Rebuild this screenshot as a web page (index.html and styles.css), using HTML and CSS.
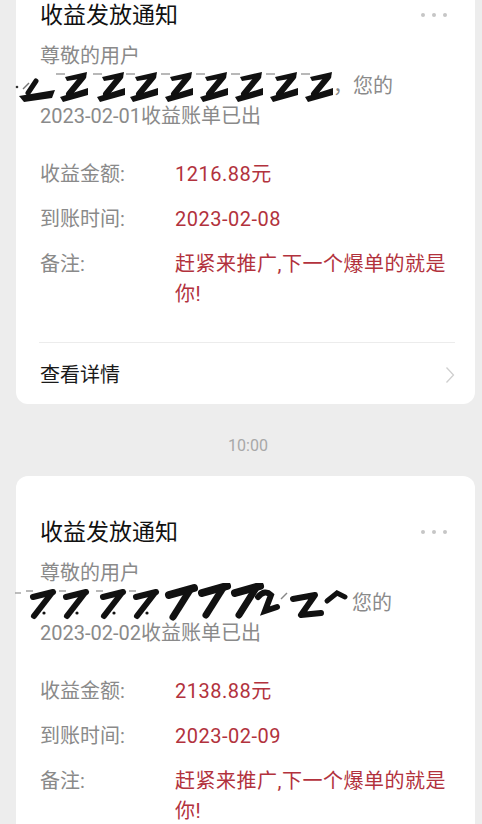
FILE: index.html
```html
<!DOCTYPE html>
<html lang="zh-CN">
<head>
<meta charset="utf-8">
<title>收益发放通知</title>
<link rel="stylesheet" href="styles.css">
</head>
<body>
<main class="feed">
  <article class="card card--first">
    <header class="card-head">
      <h2 class="card-title">收益发放通知</h2>
      <span class="more"><i></i><i></i><i></i></span>
    </header>
    <div class="greeting">
      <p>尊敬的用户</p>
      <p class="masked">
        <svg class="scribble scribble--a" width="318" height="36" viewBox="0 0 318 36">
          <defs>
            <g id="za">
              <path d="M-7 6 L2 6" stroke="#9a9a9a" stroke-width="1.4" fill="none"/>
              <path d="M2 9 L24 4 L23 10 L4 13 Z" fill="#111"/>
              <path d="M20 9 L6 26" stroke="#111" stroke-width="6" stroke-linecap="round" fill="none"/>
              <path d="M-3 29 L25 20 L25 27 L0 34 Z" fill="#111"/>
            </g>
          </defs>
          <circle cx="2" cy="19" r="1.3" fill="#333"/>
          <path d="M8 21 L14 15" stroke="#777" stroke-width="1.5" fill="none"/>
          <path d="M21 13 L13 25" stroke="#111" stroke-width="5" stroke-linecap="round" fill="none"/>
          <path d="M4 28 L40 22 L37 30 L9 34 Z" fill="#111"/>
          <use href="#za" x="48" y="0"/>
          <use href="#za" x="85" y="0"/>
          <use href="#za" x="118" y="0"/>
          <use href="#za" x="153" y="0"/>
          <use href="#za" x="188" y="0"/>
          <use href="#za" x="223" y="0"/>
          <use href="#za" x="258" y="0"/>
          <use href="#za" x="293" y="0"/>
        </svg><span>，您的</span>
      </p>
      <p>2023-02-01收益账单已出</p>
    </div>
    <dl class="fields">
      <div class="field"><dt>收益金额:</dt><dd>1216.88元</dd></div>
      <div class="field"><dt>到账时间:</dt><dd>2023-02-08</dd></div>
      <div class="field"><dt>备注:</dt><dd>赶紧来推广,下一个爆单的就是你!</dd></div>
    </dl>
    <a class="card-foot" href="#">
      <span>查看详情</span>
      <svg class="chevron" width="10" height="18" viewBox="0 0 10 18"><path d="M1.5 1.5 L8.5 9 L1.5 16.5" fill="none" stroke="#cfcfcf" stroke-width="1.3"/></svg>
    </a>
  </article>

  <div class="time">10:00</div>

  <article class="card">
    <header class="card-head">
      <h2 class="card-title">收益发放通知</h2>
      <span class="more"><i></i><i></i><i></i></span>
    </header>
    <div class="greeting">
      <p>尊敬的用户</p>
      <p class="masked">
        <svg class="scribble scribble--b" width="337" height="40" viewBox="0 0 337 40">
          <defs>
            <g id="zb">
              <path d="M-4 8 L3 8" stroke="#9a9a9a" stroke-width="1.4" fill="none"/>
              <path d="M3 14 L23 9" stroke="#111" stroke-width="6" stroke-linecap="round" fill="none"/>
              <path d="M21 11 L4 33" stroke="#111" stroke-width="6" stroke-linecap="round" fill="none"/>
              <circle cx="14" cy="30" r="1.6" fill="#111"/>
            </g>
            <g id="zc">
              <path d="M2 12 L27 5" stroke="#111" stroke-width="8" stroke-linecap="round" fill="none"/>
              <path d="M23 7 L6 34" stroke="#111" stroke-width="7" stroke-linecap="round" fill="none"/>
            </g>
          </defs>
          <path d="M-6 10 L6 10" stroke="#999" stroke-width="1.3" fill="none"/>
          <use href="#zb" x="15" y="0"/>
          <use href="#zb" x="48" y="0"/>
          <use href="#zb" x="85" y="0"/>
          <use href="#zb" x="118" y="0"/>
          <use href="#zc" x="152" y="0"/>
          <use href="#zc" x="185" y="-2"/>
          <use href="#zc" x="218" y="-2"/>
          <path d="M243 14 Q250 6 256 12 L250 28 L262 24" stroke="#111" stroke-width="6" fill="none" stroke-linecap="round"/>
          <path d="M266 16 L272 10" stroke="#888" stroke-width="1.4" fill="none"/>
          <path d="M278 16 L300 12 L286 32 L306 30" stroke="#111" stroke-width="6" fill="none" stroke-linecap="round" stroke-linejoin="round"/>
          <path d="M312 18 L322 10 L330 14" stroke="#111" stroke-width="5" fill="none" stroke-linecap="round"/>
        </svg><span>您的</span>
      </p>
      <p>2023-02-02收益账单已出</p>
    </div>
    <dl class="fields">
      <div class="field"><dt>收益金额:</dt><dd>2138.88元</dd></div>
      <div class="field"><dt>到账时间:</dt><dd>2023-02-09</dd></div>
      <div class="field"><dt>备注:</dt><dd>赶紧来推广,下一个爆单的就是你!</dd></div>
    </dl>
    <a class="card-foot" href="#">
      <span>查看详情</span>
      <svg class="chevron" width="10" height="18" viewBox="0 0 10 18"><path d="M1.5 1.5 L8.5 9 L1.5 16.5" fill="none" stroke="#cfcfcf" stroke-width="1.3"/></svg>
    </a>
  </article>
</main>
</body>
</html>
```

FILE: styles.css
```css
* { box-sizing: border-box; }

html, body {
  margin: 0;
  padding: 0;
  background: #ededed;
}

body {
  font-family: Roboto, "Noto Sans CJK SC", sans-serif;
  overflow: hidden;
}

.feed {
  padding: 0 7px 0 16px;
  margin-top: -41px;
  display: flex;
  flex-direction: column;
}

.card {
  background: #ffffff;
  border-radius: 12px;
  padding: 42px 20px 0 24px;
}

.card-head {
  display: flex;
  align-items: center;
  justify-content: space-between;
}

.card-title {
  margin: 0;
  font-size: 23px;
  font-weight: 400;
  line-height: 30px;
  color: #111111;
}

.more {
  display: flex;
  gap: 7px;
  margin-right: 8px;
  margin-top: -2px;
}

.more i {
  width: 4px;
  height: 4px;
  border-radius: 50%;
  background: #c6c6c6;
}

.greeting {
  margin-top: 10px;
}

.greeting p {
  margin: 0;
  font-size: 20px;
  line-height: 30px;
  color: #8a8a8a;
}

.masked {
  display: flex;
  align-items: center;
  height: 30px;
  white-space: nowrap;
}

.scribble {
  flex: none;
  margin-left: -25px;
}

.fields {
  margin: 28px 0 0;
  display: flex;
  flex-direction: column;
  gap: 15px;
}

.field {
  display: grid;
  grid-template-columns: 135px 1fr;
  font-size: 20px;
  line-height: 30px;
}

.field dt {
  color: #8a8a8a;
}

.field dd {
  margin: 0;
  color: #b2323d;
  letter-spacing: 0.5px;
}

.card-foot {
  margin-top: 33px;
  border-top: 1px solid #ececec;
  margin-left: -1px;
  display: flex;
  align-items: center;
  justify-content: space-between;
  padding: 17px 0 14px 1px;
  font-size: 20px;
  line-height: 30px;
  color: #1a1a1a;
  text-decoration: none;
}

.chevron {
  display: block;
}

.time {
  padding: 32px 0 20px 5px;
  line-height: 20px;
  text-align: center;
  font-size: 16px;
  color: #a8a8a8;
}
```
